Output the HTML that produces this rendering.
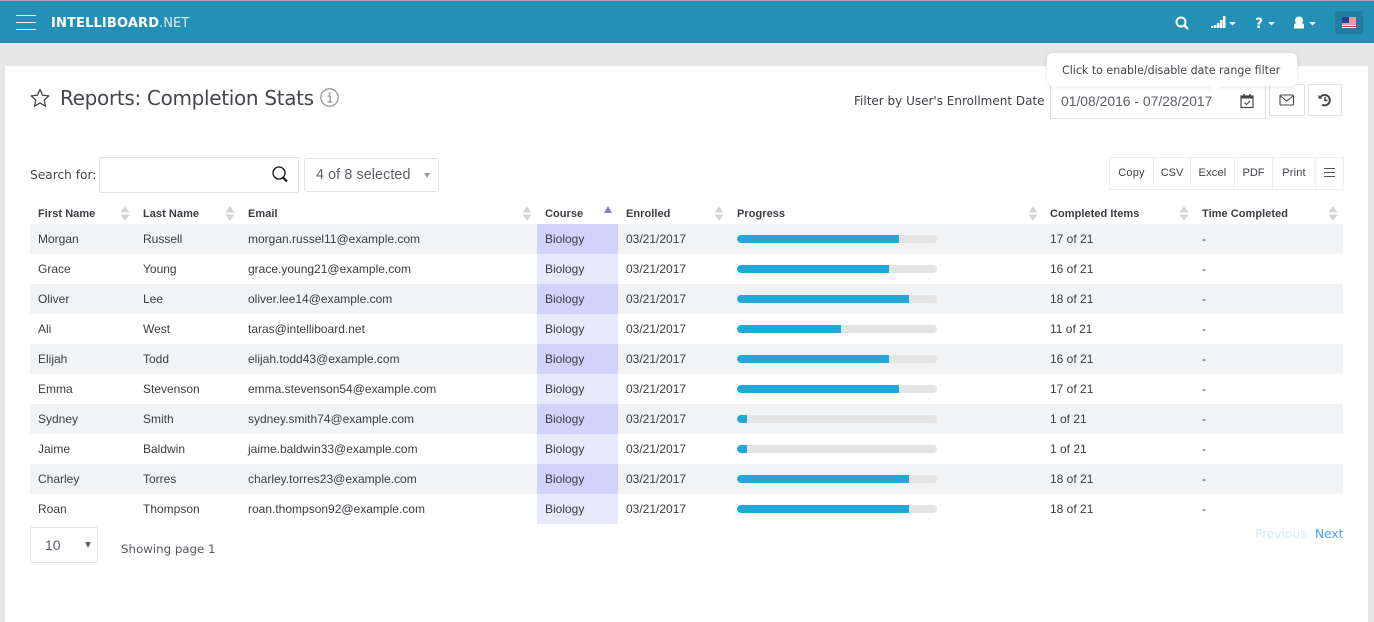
<!DOCTYPE html>
<html><head><meta charset="utf-8"><style>
html,body{margin:0;padding:0;width:1374px;height:622px;overflow:hidden;background:#e7e7e7;font-family:"Liberation Sans",sans-serif;color:#3d3f45}
.a{position:absolute;white-space:nowrap}
#top{left:0;top:0;width:1374px;height:43px;background:#2490b6;border-top:1px solid #a9a9a9;box-sizing:border-box}
#main{left:5px;top:66px;width:1363px;height:556px;background:#fff}
.o{font-family:"DejaVu Sans",sans-serif}
.r{left:30px;width:1313px;height:30px}
.t{font-size:12px;line-height:14px;color:#3b3d42}
.h{font-size:11px;line-height:14px;font-weight:bold;top:207px;color:#3b3d42;letter-spacing:.05px}
.bar{left:737px;width:200px;height:8px;background:#e4e4e4;border-radius:4px;overflow:hidden}
.bar i{display:block;height:8px;background:#1fa8d8;border-radius:4px 0 0 4px}
.b{top:158px;height:31px;line-height:30px;font-size:11px;text-align:center;border-right:1px solid #eceef0;color:#3d3f45;box-sizing:content-box;letter-spacing:.2px}
</style></head><body>
<div class="a" id="top"></div>
<div class="a" id="main"></div>

<!-- nav -->
<div class="a" style="left:16px;top:15px;width:20px;height:1px;background:#fff"></div>
<div class="a" style="left:16px;top:22px;width:20px;height:1px;background:#fff"></div>
<div class="a" style="left:16px;top:29px;width:20px;height:1px;background:#fff"></div>
<div class="a o" style="left:51px;top:15px;font-size:13px;line-height:17px;color:#fff;font-weight:bold;letter-spacing:.15px">INTELLIBOARD<span style="font-weight:normal;color:#d6edf5;letter-spacing:0">.NET</span></div>
<svg class="a" style="left:1160px;top:0" width="214" height="45" viewBox="0 0 214 45">
<circle cx="21" cy="22" r="4.500" fill="none" stroke="#fff" stroke-width="2"/><path d="M24.500 25.500l3.500 3.500" stroke="#fff" stroke-width="2.400"/>
<g fill="#fff"><rect x="51" y="26" width="2.500" height="2"/><rect x="54" y="25" width="2.500" height="3"/><rect x="57" y="23" width="2.500" height="5"/><rect x="60" y="20" width="2.500" height="8"/><rect x="63" y="16" width="2.500" height="12"/></g>
<path d="M69 22h7l-3.500 3.500zM108 22h7l-3.500 3.500zM149 22h7l-3.500 3.500z" fill="#e4f2f7"/>
<text x="95" y="28" font-family="DejaVu Sans" font-weight="bold" font-size="14" fill="#fff">?</text>
<circle cx="139" cy="20.500" r="4" fill="#fff"/><path d="M134 28.500v-2.500q0-3 3-3h4q3 0 3 3v2.500z" fill="#fff"/>
<rect x="175" y="11" width="28" height="23" rx="2" fill="#1f7da0"/>
<rect x="182" y="17" width="14" height="11" fill="#fff"/>
<path d="M182 18h14M182 20h14M182 22h14M182 24h14M182 26.500h14" stroke="#cc3344" stroke-width="1"/>
<rect x="182" y="17" width="7" height="6" fill="#2d3a9a"/>
</svg>

<!-- title -->
<svg class="a" style="left:29px;top:87px" width="22" height="22" viewBox="0 0 22 22"><path d="M11 2.500l2.600 5.700 6.200.7-4.600 4.200 1.300 6.100L11 16.100l-5.500 3.100 1.300-6.100-4.600-4.200 6.200-.7z" fill="none" stroke="#44464c" stroke-width="1.300" stroke-linejoin="round"/></svg>
<div class="a o" style="left:60px;top:85px;font-size:20px;line-height:27px;color:#44464c;letter-spacing:-.32px">Reports: Completion Stats</div>
<svg class="a" style="left:319px;top:87px" width="21" height="21" viewBox="0 0 21 21"><circle cx="10.500" cy="10.500" r="8.700" fill="none" stroke="#9a9a9a" stroke-width="1.300"/><rect x="9.700" y="5.500" width="1.700" height="1.800" fill="#8a8a8a"/><path d="M8.700 9h2.500v5.500M8.500 15h4.200" fill="none" stroke="#8a8a8a" stroke-width="1.200"/></svg>

<!-- filter -->
<div class="a o" style="left:854px;top:93px;font-size:12px;line-height:16px;color:#3d3f45">Filter by User's Enrollment Date</div>
<div class="a" style="left:1050px;top:84px;width:216px;height:35px;border:1px solid #dfe1e4;box-sizing:border-box"></div>
<div class="a" style="left:1061px;top:93px;font-size:13.900px;line-height:16px;color:#5b5e66">01/08/2016 - 07/28/2017</div>
<svg class="a" style="left:1239px;top:93px" width="16" height="16" viewBox="0 0 16 16"><rect x="2" y="3" width="12" height="11.500" fill="none" stroke="#44464c" stroke-width="1.200"/><rect x="2" y="3" width="12" height="2.500" fill="#44464c"/><path d="M5 1v3M11 1v3" stroke="#44464c" stroke-width="1.500"/><path d="M5.500 9.500l2 2 3.500-3.500" fill="none" stroke="#44464c" stroke-width="1"/></svg>
<div class="a" style="left:1269px;top:84px;width:36px;height:32px;border:1px solid #dfe1e4;border-radius:2px;box-sizing:border-box"></div>
<svg class="a" style="left:1279px;top:94px" width="16" height="12" viewBox="0 0 16 12"><rect x="1" y="1" width="13.500" height="10" rx="1" fill="none" stroke="#44464c" stroke-width="1.100"/><path d="M1.500 2l6.250 5 6.250-5" fill="none" stroke="#44464c" stroke-width="1.100"/></svg>
<div class="a" style="left:1308px;top:84px;width:34px;height:32px;border:1px solid #dfe1e4;border-radius:2px;box-sizing:border-box"></div>
<svg class="a" style="left:1317px;top:92px" width="16" height="16" viewBox="0 0 16 16"><path d="M3.500 5A5.200 5.200 0 1 1 5 12.700" fill="none" stroke="#44464c" stroke-width="2"/><path d="M1.500 2.800v4h4z" fill="#44464c"/><path d="M8 5v3.500h2.500" fill="none" stroke="#44464c" stroke-width="1.600"/></svg>

<!-- tooltip -->
<div class="a" style="left:1047px;top:53px;width:250px;height:33px;background:#fff;border-radius:5px;box-shadow:0 1px 6px rgba(0,0,0,.1)"></div>
<div class="a" style="left:1211px;top:83px;width:7px;height:7px;background:#fff;transform:rotate(45deg)"></div>
<div class="a o" style="left:1062px;top:63px;font-size:11.050px;line-height:15px;color:#44464c">Click to enable/disable date range filter</div>

<!-- search -->
<div class="a o" style="left:30px;top:167px;font-size:12.200px;line-height:16px;color:#44464c">Search for:</div>
<div class="a" style="left:99px;top:157px;width:200px;height:36px;border:1px solid #e3e4e6;border-radius:2px;box-sizing:border-box"></div>
<svg class="a" style="left:271px;top:165px" width="18" height="19" viewBox="0 0 18 19"><circle cx="8" cy="8" r="6" fill="none" stroke="#111" stroke-width="1.300"/><path d="M12 12.500l4 4" stroke="#111" stroke-width="2"/></svg>
<div class="a" style="left:304px;top:158px;width:135px;height:34px;border:1px solid #e3e4e6;border-radius:3px;box-sizing:border-box"></div>
<div class="a" style="left:316px;top:167px;font-size:14.300px;line-height:16px;color:#5b5e66;letter-spacing:.1px">4 of 8 selected</div>
<div class="a" style="left:424px;top:173px;width:0;height:0;border-left:3px solid transparent;border-right:3px solid transparent;border-top:5px solid #999"></div>

<!-- export buttons -->
<div class="a" style="left:1109px;top:157px;width:235px;height:33px;border:1px solid #eceef0;border-radius:2px;box-sizing:border-box"></div>
<div class="a b" style="left:1110px;width:43px">Copy</div>
<div class="a b" style="left:1154px;width:36px;letter-spacing:0">CSV</div>
<div class="a b" style="left:1191px;width:43px">Excel</div>
<div class="a b" style="left:1235px;width:37px;letter-spacing:0">PDF</div>
<div class="a b" style="left:1273px;width:42px">Print</div>
<div class="a" style="left:1324px;top:168px;width:11px;height:1px;background:#555"></div>
<div class="a" style="left:1324px;top:172px;width:11px;height:1px;background:#555"></div>
<div class="a" style="left:1324px;top:176px;width:11px;height:1px;background:#555"></div>

<!-- header -->
<div class="a h" style="left:38px">First Name</div>
<div class="a h" style="left:143px">Last Name</div>
<div class="a h" style="left:248px">Email</div>
<div class="a h" style="left:545px">Course</div>
<div class="a h" style="left:626px">Enrolled</div>
<div class="a h" style="left:737px">Progress</div>
<div class="a h" style="left:1050px">Completed Items</div>
<div class="a h" style="left:1202px">Time Completed</div>
<svg class="a" style="left:0;top:201px" width="1374" height="24" viewBox="0 0 1374 24">
<g fill="#d3d4d6">
<path d="M120.500 11.500l4.500-6.500 4.500 6.500zM120.500 13.500l4.500 6.500 4.500-6.500z"/>
<path d="M225.500 11.500l4.500-6.500 4.500 6.500zM225.500 13.500l4.500 6.500 4.500-6.500z"/>
<path d="M522.500 11.500l4.500-6.500 4.500 6.500zM522.500 13.500l4.500 6.500 4.500-6.500z"/>
<path d="M714.500 11.500l4.500-6.500 4.500 6.500zM714.500 13.500l4.500 6.500 4.500-6.500z"/>
<path d="M1028.500 11.500l4.500-6.500 4.500 6.500zM1028.500 13.500l4.500 6.500 4.500-6.500z"/>
<path d="M1179.500 11.500l4.500-6.500 4.500 6.500zM1179.500 13.500l4.500 6.500 4.500-6.500z"/>
<path d="M1328.500 11.500l4.500-6.500 4.500 6.500zM1328.500 13.500l4.500 6.500 4.500-6.500z"/>
</g>
<path d="M604 12l4-7 4 7z" fill="#7f80d8"/>
</svg>

<!-- row backgrounds -->
<div class="a r" style="top:224px;background:#f2f3f5"></div>
<div class="a r" style="top:284px;background:#f2f3f5"></div>
<div class="a r" style="top:344px;background:#f2f3f5"></div>
<div class="a r" style="top:404px;background:#f2f3f5"></div>
<div class="a r" style="top:464px;background:#f2f3f5"></div>
<div class="a" style="left:537px;top:224px;width:81px;height:300px;background:repeating-linear-gradient(#d2d3fc 0,#d2d3fc 30px,#e9e9fd 30px,#e9e9fd 60px)"></div>

<!-- rows -->
<div class="a t" style="left:38px;top:232px">Morgan</div><div class="a t" style="left:143px;top:232px">Russell</div><div class="a t" style="left:248px;top:232px">morgan.russel11@example.com</div><div class="a t" style="left:545px;top:232px">Biology</div><div class="a t" style="left:626px;top:232px">03/21/2017</div><div class="a bar" style="top:235px"><i style="width:162px"></i></div><div class="a t" style="left:1050px;top:232px">17 of 21</div><div class="a t" style="left:1202px;top:232px">-</div>
<div class="a t" style="left:38px;top:262px">Grace</div><div class="a t" style="left:143px;top:262px">Young</div><div class="a t" style="left:248px;top:262px">grace.young21@example.com</div><div class="a t" style="left:545px;top:262px">Biology</div><div class="a t" style="left:626px;top:262px">03/21/2017</div><div class="a bar" style="top:265px"><i style="width:152px"></i></div><div class="a t" style="left:1050px;top:262px">16 of 21</div><div class="a t" style="left:1202px;top:262px">-</div>
<div class="a t" style="left:38px;top:292px">Oliver</div><div class="a t" style="left:143px;top:292px">Lee</div><div class="a t" style="left:248px;top:292px">oliver.lee14@example.com</div><div class="a t" style="left:545px;top:292px">Biology</div><div class="a t" style="left:626px;top:292px">03/21/2017</div><div class="a bar" style="top:295px"><i style="width:172px"></i></div><div class="a t" style="left:1050px;top:292px">18 of 21</div><div class="a t" style="left:1202px;top:292px">-</div>
<div class="a t" style="left:38px;top:322px">Ali</div><div class="a t" style="left:143px;top:322px">West</div><div class="a t" style="left:248px;top:322px">taras@intelliboard.net</div><div class="a t" style="left:545px;top:322px">Biology</div><div class="a t" style="left:626px;top:322px">03/21/2017</div><div class="a bar" style="top:325px"><i style="width:104px"></i></div><div class="a t" style="left:1050px;top:322px">11 of 21</div><div class="a t" style="left:1202px;top:322px">-</div>
<div class="a t" style="left:38px;top:352px">Elijah</div><div class="a t" style="left:143px;top:352px">Todd</div><div class="a t" style="left:248px;top:352px">elijah.todd43@example.com</div><div class="a t" style="left:545px;top:352px">Biology</div><div class="a t" style="left:626px;top:352px">03/21/2017</div><div class="a bar" style="top:355px"><i style="width:152px"></i></div><div class="a t" style="left:1050px;top:352px">16 of 21</div><div class="a t" style="left:1202px;top:352px">-</div>
<div class="a t" style="left:38px;top:382px">Emma</div><div class="a t" style="left:143px;top:382px">Stevenson</div><div class="a t" style="left:248px;top:382px">emma.stevenson54@example.com</div><div class="a t" style="left:545px;top:382px">Biology</div><div class="a t" style="left:626px;top:382px">03/21/2017</div><div class="a bar" style="top:385px"><i style="width:162px"></i></div><div class="a t" style="left:1050px;top:382px">17 of 21</div><div class="a t" style="left:1202px;top:382px">-</div>
<div class="a t" style="left:38px;top:412px">Sydney</div><div class="a t" style="left:143px;top:412px">Smith</div><div class="a t" style="left:248px;top:412px">sydney.smith74@example.com</div><div class="a t" style="left:545px;top:412px">Biology</div><div class="a t" style="left:626px;top:412px">03/21/2017</div><div class="a bar" style="top:415px"><i style="width:10px"></i></div><div class="a t" style="left:1050px;top:412px">1 of 21</div><div class="a t" style="left:1202px;top:412px">-</div>
<div class="a t" style="left:38px;top:442px">Jaime</div><div class="a t" style="left:143px;top:442px">Baldwin</div><div class="a t" style="left:248px;top:442px">jaime.baldwin33@example.com</div><div class="a t" style="left:545px;top:442px">Biology</div><div class="a t" style="left:626px;top:442px">03/21/2017</div><div class="a bar" style="top:445px"><i style="width:10px"></i></div><div class="a t" style="left:1050px;top:442px">1 of 21</div><div class="a t" style="left:1202px;top:442px">-</div>
<div class="a t" style="left:38px;top:472px">Charley</div><div class="a t" style="left:143px;top:472px">Torres</div><div class="a t" style="left:248px;top:472px">charley.torres23@example.com</div><div class="a t" style="left:545px;top:472px">Biology</div><div class="a t" style="left:626px;top:472px">03/21/2017</div><div class="a bar" style="top:475px"><i style="width:172px"></i></div><div class="a t" style="left:1050px;top:472px">18 of 21</div><div class="a t" style="left:1202px;top:472px">-</div>
<div class="a t" style="left:38px;top:502px">Roan</div><div class="a t" style="left:143px;top:502px">Thompson</div><div class="a t" style="left:248px;top:502px">roan.thompson92@example.com</div><div class="a t" style="left:545px;top:502px">Biology</div><div class="a t" style="left:626px;top:502px">03/21/2017</div><div class="a bar" style="top:505px"><i style="width:172px"></i></div><div class="a t" style="left:1050px;top:502px">18 of 21</div><div class="a t" style="left:1202px;top:502px">-</div>

<!-- footer -->
<div class="a" style="left:30px;top:527px;width:68px;height:36px;border:1px solid #e3e4e6;border-radius:2px;box-sizing:border-box"></div>
<div class="a" style="left:45px;top:537px;font-size:14px;line-height:16px;color:#5b5e66">10</div>
<div class="a" style="left:85px;top:542px;width:0;height:0;border-left:3px solid transparent;border-right:3px solid transparent;border-top:6px solid #666"></div>
<div class="a o" style="left:121px;top:541px;font-size:11.800px;line-height:16px;color:#55575e">Showing page 1</div>
<div class="a o" style="left:1255px;top:527px;font-size:12.200px;line-height:15px;color:#d5e9fb">Previous</div>
<div class="a o" style="left:1315px;top:527px;font-size:12.200px;line-height:15px;color:#4aa3f0">Next</div>
</body></html>
